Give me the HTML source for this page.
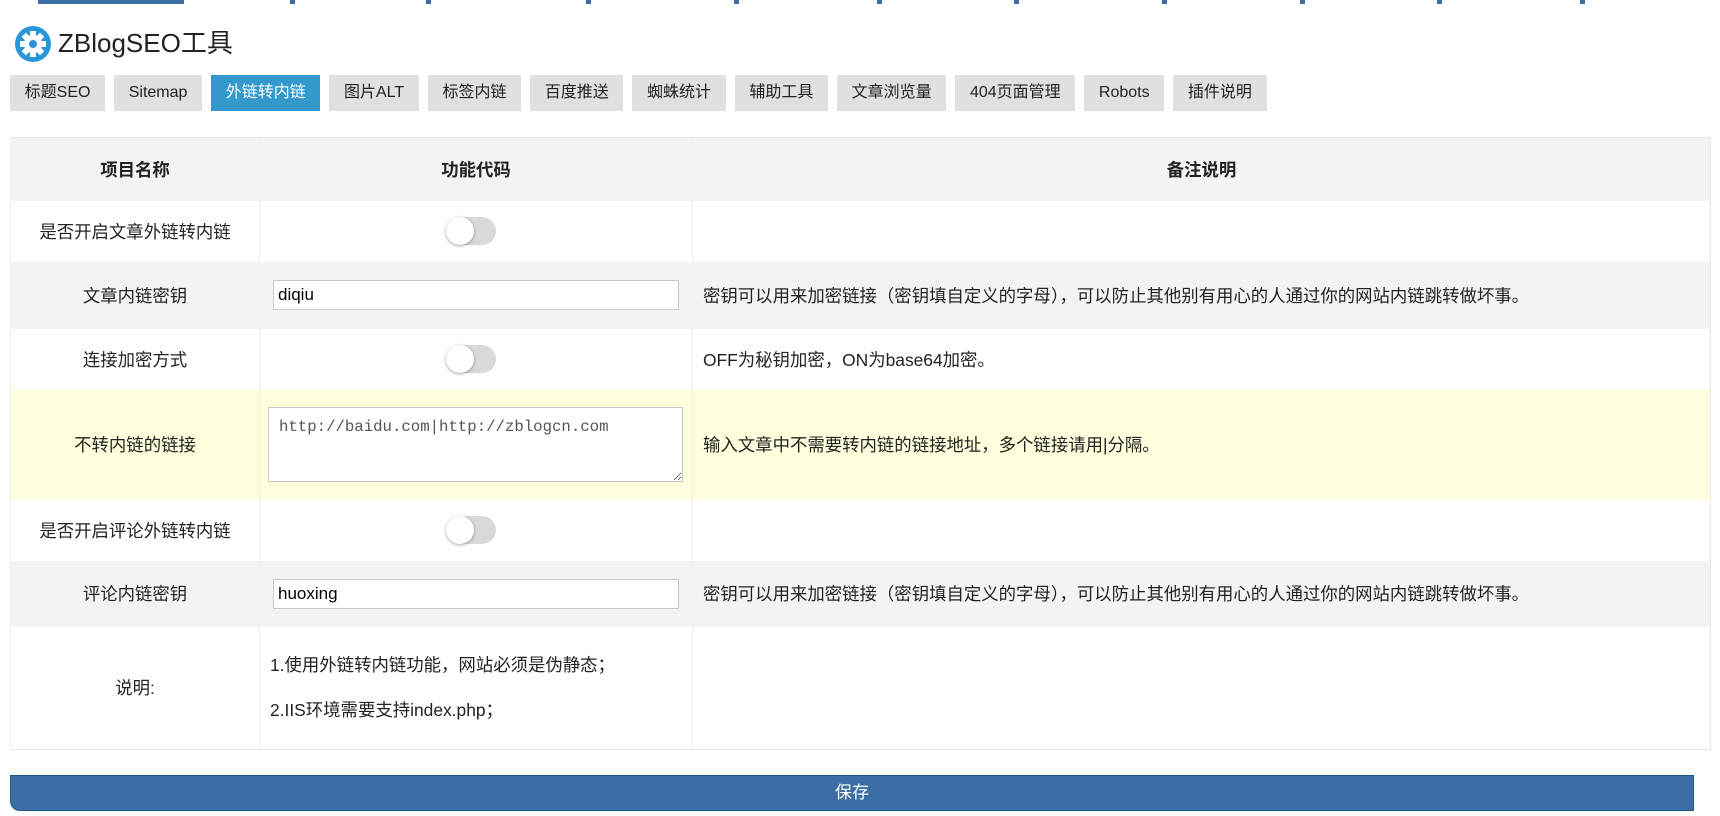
<!DOCTYPE html>
<html><head><meta charset="utf-8"><style>
*{box-sizing:border-box;margin:0;padding:0}
body{width:1720px;height:816px;background:#fff;font-family:"Liberation Sans","Noto Sans CJK SC",sans-serif;color:#333;position:relative;overflow:hidden}
.tick{position:absolute;top:0;height:4px;background:#3a6ea5}
.title{position:absolute;left:58px;top:26px;font-size:26px;line-height:34px;color:#222}
.tabs{position:absolute;left:10px;top:75px;display:flex}
.tab{height:36px;line-height:36px;padding:0 14.65px;background:#e0e0e0;margin-right:9px;font-size:16px;color:#222}
.tab.on{background:#3399cc;color:#fff}
table{position:absolute;left:10px;top:137px;width:1701px;border-collapse:collapse;border:1px solid #e6e6e6;font-size:17.4px;color:#222}
td,th{border-left:1px solid #eee;text-align:center;padding:0}
th{font-weight:bold;background:#f3f3f3;height:63px}
tr.g td{background:#f3f3f3}
tr.y td{background:#ffffdd}
td.n{text-align:left;padding-left:10px}
.tg{display:inline-block;width:50px;height:28px;border-radius:14px;background:#d9d9d9;position:relative;vertical-align:middle;margin-right:11px}
.tg:after{content:"";position:absolute;left:0;top:0;width:28px;height:28px;border-radius:50%;background:#fff;box-shadow:0 1px 3px rgba(0,0,0,.35)}
input{width:406px;height:30px;border:1px solid #c8c8c8;font-size:17px;padding:0 4px;font-family:"Liberation Sans",sans-serif;color:#000;background:#fff}
textarea{width:415px;height:75px;border:1px solid #c8c8c8;font-family:"Liberation Mono",monospace;font-size:15.7px;padding:10px;color:#555;resize:both;display:block;margin-left:8px}
.save{position:absolute;left:10px;top:775px;width:1684px;height:36px;background:#3b6ea5;border:1px solid #1e5a8a;color:#fff;text-align:center;line-height:34px;font-size:17px;border-radius:0 0 0 10px}
</style></head><body>
<div class="tick" style="left:38px;width:146px"></div>
<div class="tick" style="left:290px;width:5px"></div>
<div class="tick" style="left:426px;width:5px"></div>
<div class="tick" style="left:586px;width:5px"></div>
<div class="tick" style="left:734px;width:5px"></div>
<div class="tick" style="left:877px;width:5px"></div>
<div class="tick" style="left:1014px;width:5px"></div>
<div class="tick" style="left:1162px;width:5px"></div>
<div class="tick" style="left:1300px;width:5px"></div>
<div class="tick" style="left:1437px;width:5px"></div>
<div class="tick" style="left:1580px;width:5px"></div>
<svg style="position:absolute;left:15px;top:26px" width="36" height="36" viewBox="0 0 36 36"><circle cx="18" cy="18" r="18" fill="#2a96d8"/><g fill="#fff" transform="translate(18 18)"><circle r="9"/><rect x="-3" y="-13" width="6" height="26"/><rect x="-13" y="-3" width="26" height="6"/><rect x="-3" y="-13" width="6" height="26" transform="rotate(45)"/><rect x="-3" y="-13" width="6" height="26" transform="rotate(-45)"/></g><circle cx="18" cy="18" r="4" fill="#2a96d8"/></svg>
<div class="title">ZBlogSEO工具</div>
<div class="tabs"><div class="tab">标题SEO</div><div class="tab">Sitemap</div><div class="tab on">外链转内链</div><div class="tab">图片ALT</div><div class="tab">标签内链</div><div class="tab">百度推送</div><div class="tab">蜘蛛统计</div><div class="tab">辅助工具</div><div class="tab">文章浏览量</div><div class="tab">404页面管理</div><div class="tab">Robots</div><div class="tab">插件说明</div></div>
<table>
<tr><th style="width:249px">项目名称</th><th style="width:433px">功能代码</th><th>备注说明</th></tr>
<tr style="height:61px"><td>是否开启文章外链转内链</td><td><span class="tg"></span></td><td></td></tr>
<tr class="g" style="height:67px"><td>文章内链密钥</td><td><input value="diqiu"></td><td class="n">密钥可以用来加密链接（密钥填自定义的字母），可以防止其他别有用心的人通过你的网站内链跳转做坏事。</td></tr>
<tr style="height:61px"><td>连接加密方式</td><td><span class="tg"></span></td><td class="n">OFF为秘钥加密，ON为base64加密。</td></tr>
<tr class="y" style="height:110px"><td>不转内链的链接</td><td><textarea>http://baidu.com|http://zblogcn.com</textarea></td><td class="n">输入文章中不需要转内链的链接地址，多个链接请用|分隔。</td></tr>
<tr style="height:61px"><td>是否开启评论外链转内链</td><td><span class="tg"></span></td><td></td></tr>
<tr class="g" style="height:66px"><td>评论内链密钥</td><td><input value="huoxing"></td><td class="n">密钥可以用来加密链接（密钥填自定义的字母），可以防止其他别有用心的人通过你的网站内链跳转做坏事。</td></tr>
<tr style="height:123px"><td>说明:</td><td style="text-align:left;padding-left:10px;line-height:45px">1.使用外链转内链功能，网站必须是伪静态；<br>2.IIS环境需要支持index.php；</td><td></td></tr>
</table>
<div class="save">保存</div>
</body></html>
